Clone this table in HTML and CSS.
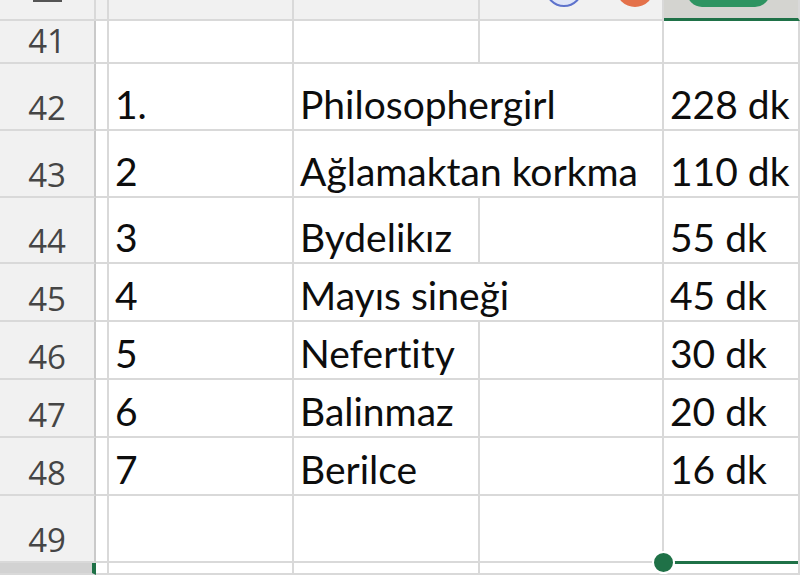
FILE: index.html
```html
<!DOCTYPE html>
<html lang="tr">
<head>
<meta charset="utf-8">
<title>Sheet</title>
<link rel="stylesheet" href="styles.css">
</head>
<body>
<div class="sheet">
  <div class="c hd corner"><span class="corner-mark"></span></div>
  <div class="c hd"></div>
  <div class="c hd"></div>
  <div class="c hd"></div>
  <div class="c hd hd-tools"><span class="avatar avatar-blue"></span><span class="avatar avatar-orange"></span></div>
  <div class="c hd hd-sel"><span class="pill"></span></div>

  <div class="c rh">41</div>
  <div class="c"></div><div class="c"></div><div class="c"></div><div class="c"></div><div class="c"></div>

  <div class="c rh">42</div>
  <div class="c"></div><div class="c">1.</div><div class="c span2">Philosophergirl</div><div class="c">228 dk</div>

  <div class="c rh">43</div>
  <div class="c"></div><div class="c">2</div><div class="c span2">Ağlamaktan korkma</div><div class="c">110 dk</div>

  <div class="c rh">44</div>
  <div class="c"></div><div class="c">3</div><div class="c">Bydelikız</div><div class="c"></div><div class="c">55 dk</div>

  <div class="c rh">45</div>
  <div class="c"></div><div class="c">4</div><div class="c span2">Mayıs sineği</div><div class="c">45 dk</div>

  <div class="c rh">46</div>
  <div class="c"></div><div class="c">5</div><div class="c">Nefertity</div><div class="c"></div><div class="c">30 dk</div>

  <div class="c rh">47</div>
  <div class="c"></div><div class="c">6</div><div class="c">Balinmaz</div><div class="c"></div><div class="c">20 dk</div>

  <div class="c rh">48</div>
  <div class="c"></div><div class="c">7</div><div class="c">Berilce</div><div class="c"></div><div class="c">16 dk</div>

  <div class="c rh">49</div>
  <div class="c"></div><div class="c"></div><div class="c"></div><div class="c"></div><div class="c"></div>

  <div class="c rh rh-sel"></div>
  <div class="c"></div><div class="c"></div><div class="c"></div><div class="c"></div><div class="c cell-sel"></div>
</div>
</body>
</html>
```
FILE: styles.css
```css
html, body {
  margin: 0;
  padding: 0;
  background: #ffffff;
}
body {
  overflow: hidden;
}
.sheet {
  display: grid;
  grid-template-columns: 96px 13px 185px 186px 184px 1fr;
  grid-template-rows: 21px 43px 67px 67px 66px 58px 58px 58px 58px 67px 1fr;
  width: 800px;
  height: 575px;
  overflow: hidden;
}
.c {
  box-sizing: border-box;
  border-right: 2px solid #d9d9d9;
  border-bottom: 2px solid #d9d9d9;
  display: flex;
  align-items: flex-end;
  padding: 0 0 5px 6px;
  font-family: Lato, "Noto Sans", sans-serif;
  font-size: 39px;
  line-height: 39px;
  font-variant-ligatures: none;
  color: #0d0d0d;
  white-space: nowrap;
  min-width: 0;
  position: relative;
}
.span2 {
  grid-column: span 2;
}
.rh {
  background: #f1f1f1;
  border-right-color: #cacaca;
  justify-content: center;
  padding: 0 0 5px 0;
  font-family: "Open Sans", sans-serif;
  font-size: 33px;
  line-height: 33px;
  color: #454545;
}
.rh-sel {
  background: #d2d2d2;
  border-right: 4px solid #1f7147;
}
.hd {
  background: #f1f1f1;
  padding: 0;
  align-items: flex-start;
}
.corner-mark {
  display: block;
  width: 29px;
  height: 2px;
  margin-left: 33px;
  background: #555555;
}
.hd-tools {
  padding-left: 65px;
  gap: 33px;
}
.avatar {
  display: block;
  width: 38px;
  height: 38px;
  border-radius: 50%;
  margin-top: -31px;
  box-sizing: border-box;
  flex: none;
}
.avatar-blue {
  background: #dfe5f7;
  border: 2px solid #5d72cc;
}
.avatar-orange {
  background: #e4714a;
}
.hd-sel {
  background: #d4d4d0;
  border-bottom: 3px solid #1f7147;
  padding-left: 23px;
}
.pill {
  display: block;
  width: 83px;
  height: 30px;
  border-radius: 15px;
  margin-top: -23px;
  background: #2e9461;
  flex: none;
}
.cell-sel::before {
  content: "";
  position: absolute;
  left: 0;
  right: 0;
  top: -2px;
  height: 3px;
  background: #1f7147;
}
.cell-sel::after {
  content: "";
  position: absolute;
  left: -12px;
  top: -12px;
  width: 19px;
  height: 19px;
  border-radius: 50%;
  background: #1f7147;
  border: 2px solid #ffffff;
}
```
